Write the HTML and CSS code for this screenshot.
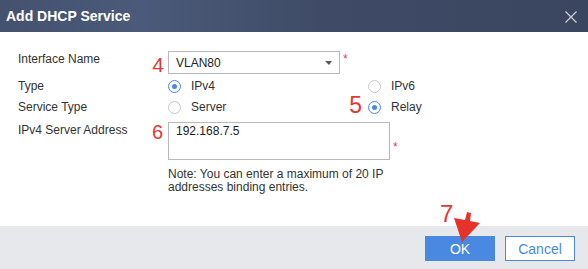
FILE: index.html
```html
<!DOCTYPE html>
<html lang="en">
<head>
  <meta charset="UTF-8">
  <meta name="viewport" content="width=device-width, initial-scale=1">
  <title>Add DHCP Service</title>
  <link rel="stylesheet" href="styles.css">
</head>
<body>

<div class="dialog">
  <div class="dialog-header">
    <span class="dialog-title">Add DHCP Service</span>
    <button class="close-btn" aria-label="Close">
      <svg width="12" height="12" viewBox="0 0 12 12"><path d="M0.5 0.5 L11.5 11.5 M11.5 0.5 L0.5 11.5" stroke="#c9cdd6" stroke-width="1.3" fill="none"/></svg>
    </button>
  </div>

  <div class="dialog-body">
    <div class="form-row row-select">
      <label class="form-label">Interface Name</label>
      <div class="field">
        <span class="mark mark-4">4</span>
        <div class="select-box">
          <span>VLAN80</span>
          <span class="caret"></span>
        </div>
        <span class="required">*</span>
      </div>
    </div>

    <div class="form-row row-radio">
      <label class="form-label">Type</label>
      <div class="radio-group">
        <div class="radio-option"><span class="radio checked"></span>IPv4</div>
        <div class="radio-option"><span class="radio"></span>IPv6</div>
      </div>
    </div>

    <div class="form-row row-radio">
      <label class="form-label">Service Type</label>
      <div class="radio-group">
        <div class="radio-option"><span class="radio"></span>Server</div>
        <div class="radio-option">
          <span class="mark mark-5">5</span>
          <span class="radio checked"></span>Relay
        </div>
      </div>
    </div>

    <div class="form-row row-area">
      <label class="form-label">IPv4 Server Address</label>
      <div class="field-col">
        <div class="field">
          <span class="mark mark-6">6</span>
          <div class="text-area">192.168.7.5</div>
          <span class="required required-low">*</span>
        </div>
        <p class="note">Note: You can enter a maximum of 20 IP addresses binding entries.</p>
      </div>
    </div>
  </div>

  <div class="dialog-footer">
    <button class="btn btn-primary">OK</button>
    <button class="btn btn-default">Cancel</button>
  </div>

  <span class="mark mark-7">7</span>
  <svg class="pointer" width="30" height="34" viewBox="0 0 30 34">
    <polygon points="13,0 17,1 16,9 26,11 8,30 0,6 11,8" fill="#e5332a"/>
  </svg>
</div>

</body>
</html>
```

FILE: styles.css
```css
body {
  margin: 0;
  font-family: "Liberation Sans", Arial, sans-serif;
  font-size: 12px;
  color: #333;
  background: #fff;
}

.dialog {
  position: relative;
  width: 588px;
  height: 269px;
  display: flex;
  flex-direction: column;
  overflow: hidden;
}

.dialog-header {
  height: 32px;
  display: flex;
  align-items: center;
  justify-content: space-between;
  padding: 0 11px 0 6px;
  background: linear-gradient(to right, #44526f 0%, #4b5a7a 24%, #3f4b66 55%, #3a4560 100%);
}

.dialog-title {
  color: #fff;
  font-weight: bold;
  font-size: 14px;
  line-height: 32px;
}

.close-btn {
  border: none;
  background: none;
  padding: 0;
  width: 12px;
  height: 12px;
  display: flex;
  margin-top: 1px;
}

.dialog-body {
  flex: 1;
  padding: 19px 0 0 18px;
}

.form-row {
  display: flex;
}

.form-label {
  width: 150px;
  flex-shrink: 0;
  line-height: 14px;
}

.row-select {
  height: 23px;
}

.row-select .form-label {
  padding-top: 1px;
}

.row-radio {
  height: 21px;
}

.row-radio:nth-child(2) {
  margin-top: 5px;
}

.row-area {
  margin-top: 1px;
}

.row-area .form-label {
  padding-top: 1px;
}

.field {
  position: relative;
  display: flex;
}

.select-box {
  height: 21px;
  border: 1px solid #b9b9b9;
  display: flex;
  align-items: center;
  justify-content: space-between;
  padding: 0 7px;
  box-sizing: content-box;
  width: 156px;
  color: #222;
}

.caret {
  width: 0;
  height: 0;
  border-left: 4px solid transparent;
  border-right: 3px solid transparent;
  border-top: 4px solid #595959;
  margin: 1px 0 0 0;
}

.required {
  color: #e8356b;
  font-size: 12px;
  margin: 3px 0 0 3px;
  line-height: 10px;
}

.required-low {
  margin-top: 20px;
}

.radio-group {
  display: flex;
}

.radio-option {
  position: relative;
  width: 200px;
  display: flex;
  align-items: flex-start;
  line-height: 14px;
}

.radio {
  width: 11px;
  height: 11px;
  border: 1px solid #c2c6cd;
  border-radius: 50%;
  margin: 1px 10px 0 0;
  position: relative;
  background: #fff;
}

.radio.checked {
  border-color: #4a87e0;
}

.radio.checked::after {
  content: "";
  position: absolute;
  left: 3px;
  top: 3px;
  width: 5px;
  height: 5px;
  border-radius: 50%;
  background: #4a87e0;
}

.field-col {
  display: flex;
  flex-direction: column;
}

.text-area {
  width: 213px;
  height: 35px;
  border: 1px solid #b9b9b9;
  padding: 1px 0 0 7px;
  line-height: 14px;
  color: #222;
  box-sizing: content-box;
}

.note {
  margin: 8px 0 0;
  width: 222px;
  line-height: 13px;
  color: #333;
}

.dialog-footer {
  height: 43px;
  background: #e7e8ec;
  display: flex;
  justify-content: flex-end;
  align-items: flex-start;
  gap: 10px;
  padding: 10px 13px 0 0;
  box-sizing: border-box;
}

.btn {
  width: 70px;
  height: 25px;
  font-family: "Liberation Sans", Arial, sans-serif;
  font-size: 14px;
  border-radius: 0;
  padding: 0;
}

.btn-primary {
  background: #4a89e1;
  border: 1px solid #4a89e1;
  color: #fff;
}

.btn-default {
  background: #fff;
  border: 1px solid #4a89e1;
  color: #4a89e1;
}

.mark {
  position: absolute;
  color: #e8372f;
  line-height: 1;
  font-family: "Liberation Sans", Arial, sans-serif;
}

.mark-4 {
  font-size: 21px;
  right: calc(100% + 4px);
  top: 3px;
}

.mark-5 {
  font-size: 23px;
  right: calc(100% + 6px);
  top: -6px;
}

.mark-6 {
  font-size: 20px;
  right: calc(100% + 5px);
  top: 0;
}

.mark-7 {
  font-size: 24px;
  left: 440px;
  top: 202px;
}

.pointer {
  position: absolute;
  left: 454px;
  top: 212px;
}
```
